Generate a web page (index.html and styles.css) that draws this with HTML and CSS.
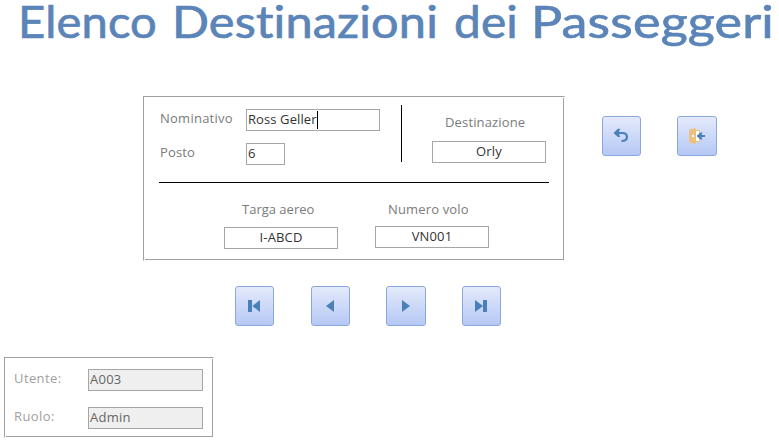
FILE: index.html
```html
<!DOCTYPE html>
<html lang="it">
<head>
<meta charset="utf-8">
<title>Elenco Destinazioni dei Passeggeri</title>
<link rel="stylesheet" href="styles.css">
</head>
<body>
<h1 class="title">
<svg width="779" height="60" viewBox="0 0 779 60">
<text x="18" y="38" textLength="139" lengthAdjust="spacingAndGlyphs">Elenco</text>
<text x="172" y="38" textLength="266" lengthAdjust="spacingAndGlyphs">Destinazioni</text>
<text x="454" y="38" textLength="64" lengthAdjust="spacingAndGlyphs">dei</text>
<text x="531" y="38" textLength="243" lengthAdjust="spacingAndGlyphs">Passeggeri</text>
</svg>
</h1>
<main class="top">
<section class="frame passenger">
<div class="upper">
<div class="person">
<label class="nominativo">Nominativo</label><div class="field name"><span>Ross Geller</span><i class="caret"></i></div>
<label class="posto">Posto</label><div class="field seat"><span>6</span></div>
</div>
<div class="destination">
<label class="destinazione">Destinazione</label><div class="field center"><span class="orly">Orly</span></div>
</div>
</div>
<div class="lower">
<div class="plane"><label class="targa">Targa aereo</label><div class="field center"><span class="plate">I-ABCD</span></div></div>
<div class="flight"><label class="numero">Numero volo</label><div class="field center"><span class="number">VN001</span></div></div>
</div>
</section>
<div class="actions">
<button class="btn" aria-label="Annulla"><svg width="39" height="40" viewBox="0 0 39 40"><path d="M15 17H20C24 17 25 19 25 21C25 24 22.5 25 19.5 25" fill="none" stroke="#4a80b8" stroke-width="2.2"/><path d="M11.5 17L16 12.7H18.2L16.5 17L18.2 21H16Z" fill="#4a80b8"/></svg></button>
<button class="btn wide" aria-label="Esci"><svg width="40" height="40" viewBox="0 0 40 40"><path d="M18 14.5H22.5V25.5H18Z" fill="#fff" stroke="#eac180"/><path d="M12 13.5L19 12V28L12 26.5Z" fill="#eac180"/><path d="M15 19H17V21H15Z" fill="#fff"/><path d="M19.5 20L23.5 16.5H25.5L24.5 19H28V21H24.5L25.5 23.5H23.5Z" fill="#4a80b8"/></svg></button>
</div>
</main>
<nav class="nav">
<button class="btn" aria-label="Primo"><svg width="39" height="40" viewBox="0 0 39 40"><path d="M13 14H17V26H13ZM25 14V26L17.3 20Z" fill="#4a80b8"/></svg></button>
<button class="btn" aria-label="Precedente"><svg width="39" height="40" viewBox="0 0 39 40"><path d="M23 14V26L15 20Z" fill="#4a80b8"/></svg></button>
<button class="btn wide" aria-label="Successivo"><svg width="40" height="40" viewBox="0 0 40 40"><path d="M16 14V26L24 20Z" fill="#4a80b8"/></svg></button>
<button class="btn" aria-label="Ultimo"><svg width="39" height="40" viewBox="0 0 39 40"><path d="M13 14V26L21 20ZM21 14H25V26H21Z" fill="#4a80b8"/></svg></button>
</nav>
<section class="frame user">
<label class="utente">Utente:</label><div class="field"><span class="code">A003</span></div>
<label class="ruolo">Ruolo:</label><div class="field"><span class="admin">Admin</span></div>
</section>
</body>
</html>
```
FILE: styles.css
```css
* { box-sizing: border-box; }
body { margin: 0; background: #fff; color: #333; font: 13px/18px "Open Sans", "Noto Sans", sans-serif; letter-spacing: .15px; overflow: hidden; }
.title { margin: 0; height: 96px; }
.title svg { display: block; overflow: visible; }
.title text { font: 400 45px Lato, sans-serif; font-variant-ligatures: none; fill: #5b84b8; stroke: #5b84b8; stroke-width: .7px; }
.top { display: flex; height: 165px; padding-left: 143px; }
.frame { border: 1px solid; border-color: #a0a0a0 #fff #fff #a0a0a0; box-shadow: inset 1px 1px #fff, inset -1px -1px #a0a0a0; }
.passenger { width: 422px; height: 165px; padding: 8px 15px 0; }
.upper { display: flex; height: 78px; border-bottom: 1px solid #000; }
.person { display: grid; grid-template-columns: 87px 134px; grid-template-rows: 22px 22px; row-gap: 12px; width: 243px; height: 57px; padding-top: 4px; border-right: 1px solid #000; }
label { display: block; color: #7b7b7b; white-space: nowrap; }
.field { display: flex; height: 22px; border: 1px solid #a6a6a6; padding-left: 1px; line-height: 18px; white-space: nowrap; }
.name { letter-spacing: .1px; }
.center { width: 114px; justify-content: center; padding: 0; }
.person label { padding-left: 1px; }
.nominativo { letter-spacing: .25px; }
.seat { width: 39px; line-height: 19px; }
.caret { width: 1px; height: 18px; background: #000; margin-top: 1px; }
.destination { width: 114px; margin-left: 30px; padding-top: 8px; }
.destinazione { height: 28px; padding-left: 13px; }
.lower { display: flex; gap: 37px; padding: 17px 0 0 65px; }
.lower label { height: 26px; }
.plane .field { line-height: 18px; }
.plane label { height: 27px; padding-left: 18px; letter-spacing: 0; }
.flight label { padding-left: 13px; }
.actions { display: flex; gap: 36px; margin: 20px 0 0 37px; }
.btn { width: 39px; height: 40px; padding: 0; border: 1px solid #8ba8de; border-radius: 3px; background: linear-gradient(#e4eafb, #b5c8f5); }
.btn.wide { width: 40px; }
.btn svg { display: block; margin: -1px; }
.nav { display: flex; padding: 25px 0 0 235px; height: 96px; gap: 36px; }
.nav .btn:first-child { margin-right: 1px; }
.user { display: grid; grid-template-columns: 74px 115px; grid-template-rows: 22px 22px; row-gap: 16px; width: 210px; height: 81px; margin-left: 4px; padding: 11px 0 0 9px; }
.user label { color: #a0a0a0; letter-spacing: .4px; }
.user .field { background: #efefef; color: #666; letter-spacing: .25px; }
```
